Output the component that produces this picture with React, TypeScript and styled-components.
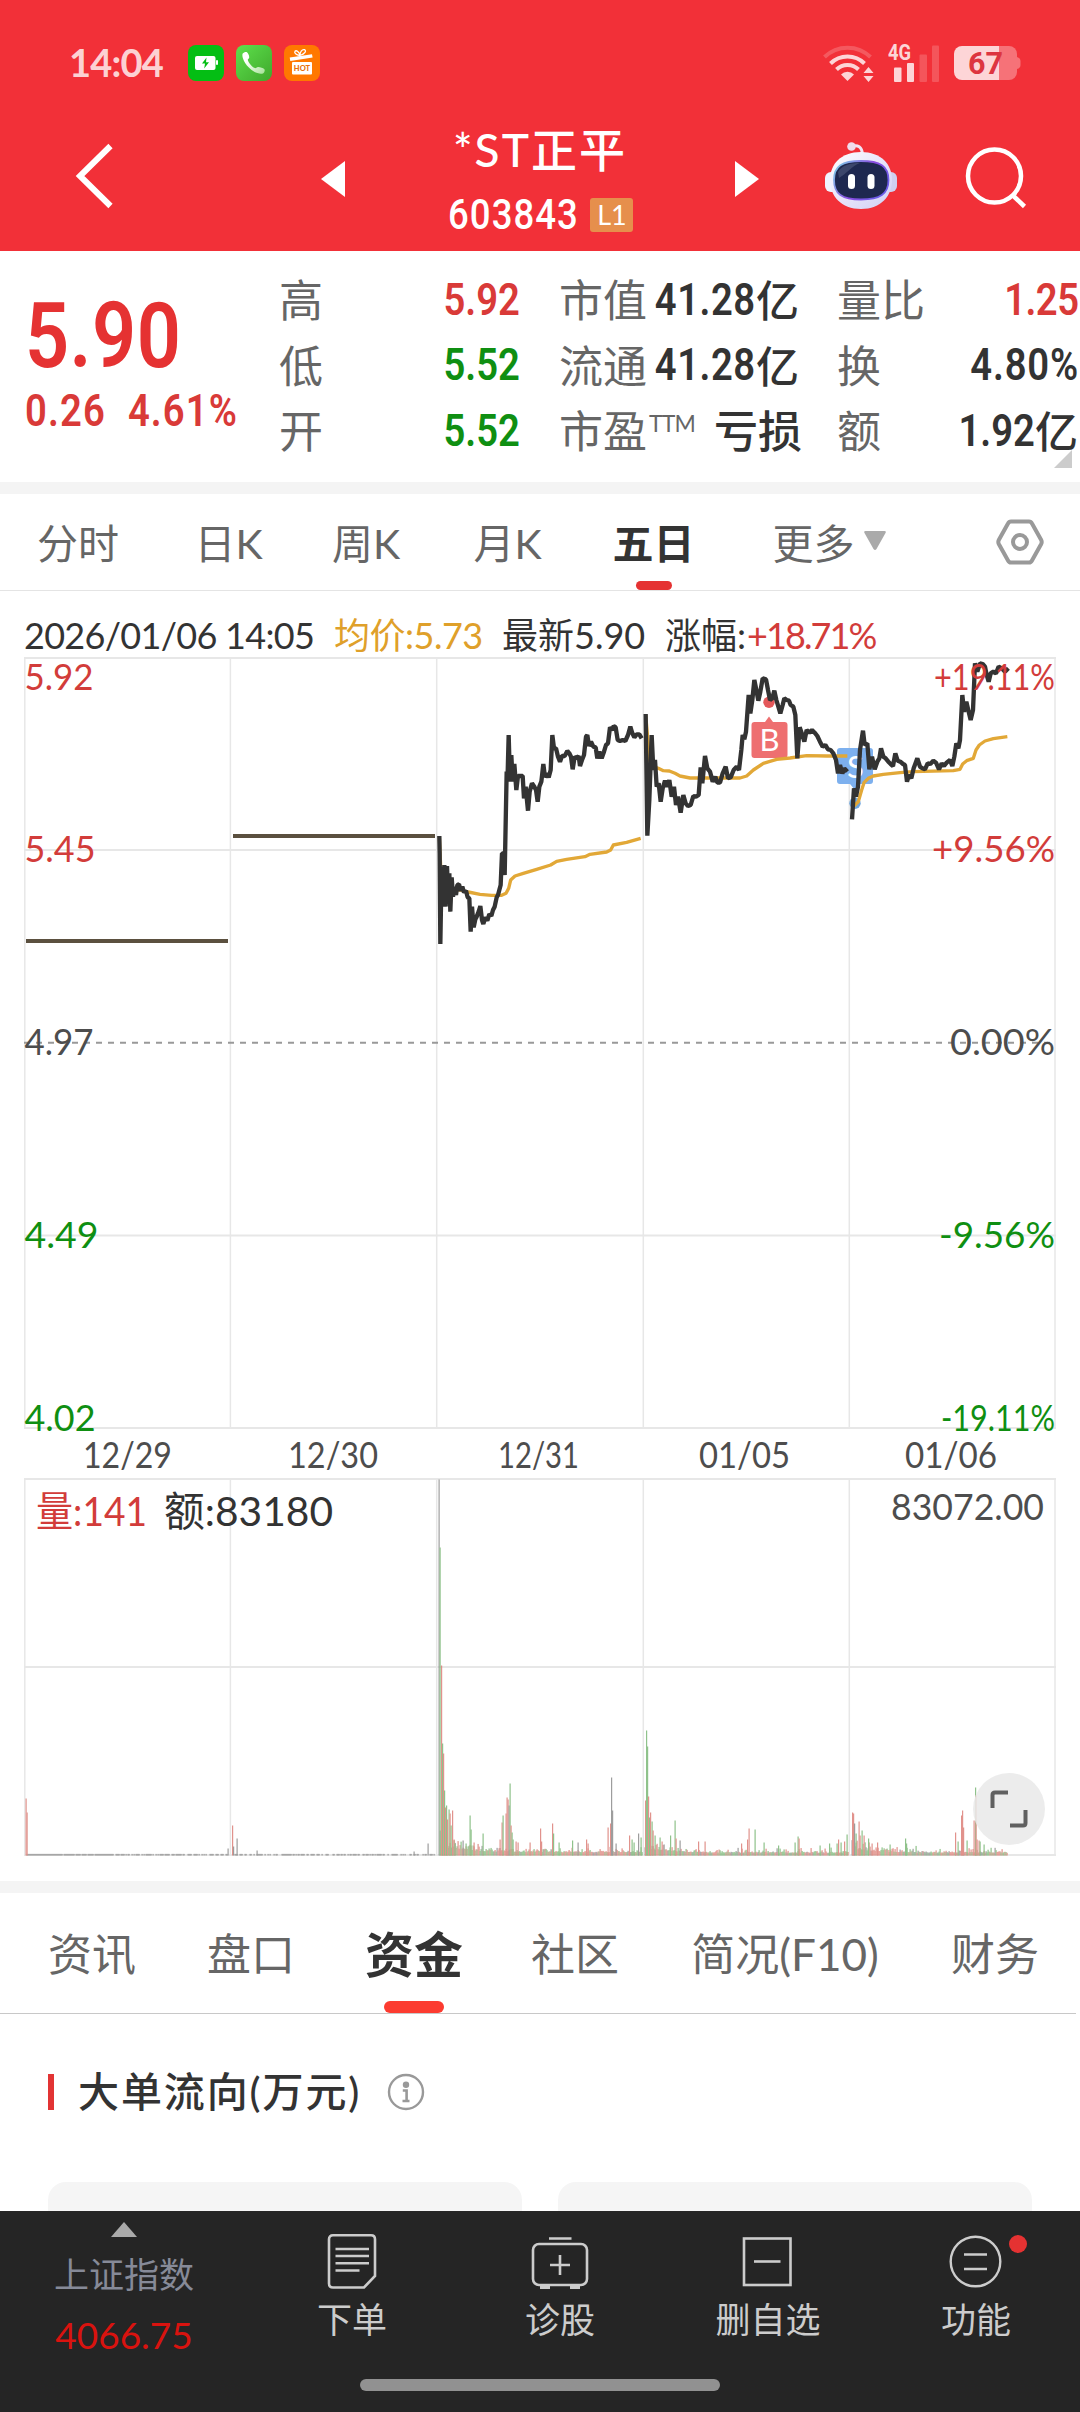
import React from 'react';
import styled, { createGlobalStyle, css } from 'styled-components';

const SANS = `Lato, "Noto Sans CJK SC", sans-serif`;
const RED = '#d23c3a';
const GREEN = '#0f8f12';

const GlobalStyle = createGlobalStyle`
  * { box-sizing: border-box; }
  body { margin: 0; background: #fff; font-family: ${SANS}; color: #333; }
  svg { display: block; overflow: visible; }
  button { border: 0; padding: 0; background: none; font: inherit; color: inherit; }
`;

const Screen = styled.div`
  width: 1080px;
  height: 2412px;
  display: flex;
  flex-direction: column;
  overflow: hidden;
  background: #fff;
`;

/* ---------- header ---------- */

const Header = styled.header`
  height: 251px;
  flex: none;
  background: #f23038;
`;

const StatusBar = styled.div`
  height: 101px;
  padding: 25px 59px 0 69px;
  display: flex;
  align-items: center;
  justify-content: space-between;
  color: rgba(255, 255, 255, 0.8);
`;

const Clock = styled.span`
  width: 107px;
  font: 700 38px/40px ${SANS};
  letter-spacing: -0.8px;
  margin-top: -3px;
`;

const StatusGroup = styled.div<{ $gap: number }>`
  display: flex;
  align-items: center;
  gap: ${(p) => p.$gap}px;
`;

const TitleBar = styled.div`
  height: 150px;
  display: grid;
  grid-template-columns: 312px 42px 372px 42px 186px 84px;
  align-items: center;
  justify-items: center;
`;

const BackButton = styled.button`
  justify-self: start;
  margin-left: 76px;
`;

const TitleBlock = styled.div`
  display: flex;
  flex-direction: column;
  align-items: center;
  color: #fff;
  padding-top: 8px;
`;

const StockName = styled.div`
  font: 500 46px/52px Lato, "Noto Sans CJK SC", sans-serif;
  letter-spacing: 2px;
`;

const CodeRow = styled.div`
  display: flex;
  align-items: center;
  height: 60px;
  padding-top: 18px;
`;

const Din = styled.span<{ $size?: number; $color?: string; $left?: boolean; $ls?: number; $lh?: number }>`
  display: inline-block;
  flex: none;
  font: 600 ${(p) => p.$size ?? 45}px/${(p) => p.$lh ?? 1.2} Roboto, sans-serif;
  color: ${(p) => p.$color ?? '#333'};
  letter-spacing: ${(p) => p.$ls ?? 0}px;
  transform: scaleX(0.85);
  transform-origin: ${(p) => (p.$left ? 'left' : 'right')} center;
  white-space: pre;
`;

const CodeText = styled(Din)`
  margin-left: -22px;
  font-weight: 500;
`;

const LevelBadge = styled.span`
  width: 43px;
  height: 34px;
  margin-left: 12px;
  border-radius: 3px;
  background: #e68f4c;
  font: 400 27px/33px ${SANS};
  text-align: center;
`;

/* ---------- quote ---------- */

const Quote = styled.section`
  height: 231px;
  flex: none;
  padding-top: 16px;
  display: grid;
  grid-template-columns: 280px 240px 40px 240px 38px 241px;
  position: relative;
`;

const PriceBlock = styled.div`
  padding-left: 25px;
  display: flex;
  flex-direction: column;
`;

const LastPrice = styled.div`
  height: 117px;
  padding-top: 24px;
  line-height: 0;
`;

const Change = styled(Din)`
  word-spacing: 0.5px;
`;

const Stats = styled.div<{ $col: number }>`
  grid-column: ${(p) => p.$col};
  display: flex;
  flex-direction: column;
`;

const StatRow = styled.div`
  height: 65.5px;
  display: flex;
  align-items: center;
  justify-content: space-between;
`;

const StatLabel = styled.span`
  font: 400 44px/62px "Noto Sans CJK SC", sans-serif;
  color: #666;
  white-space: nowrap;
  flex: none;
  margin: -3px 0 0 -1px;
`;

const Ttm = styled.sup`
  font: 400 23px/20px ${SANS};
  vertical-align: 16px;
  margin-left: 2px;
  letter-spacing: -0.8px;
`;

/* The condensed digits leave slack on their left, which the negative margin absorbs. */
const StatValue = styled.span`
  display: flex;
  align-items: center;
  margin: 0 -2px 0 -40px;
`;

const Cjk = styled.span`
  font: 500 44px/62px "Noto Sans CJK SC", sans-serif;
  color: #333;
  margin-top: -3px;
`;

const Unit = styled(Cjk)`
  font-size: 43px;
  margin-right: 3px;
`;

const Corner = styled.i`
  position: absolute;
  right: 8px;
  bottom: 14px;
  width: 18px;
  height: 18px;
  background: #ccc;
  clip-path: polygon(100% 0, 100% 100%, 0 100%);
`;

const Band = styled.div`
  height: 12px;
  flex: none;
  background: #f4f4f4;
`;

/* ---------- tabs ---------- */

const PeriodTabs = styled.nav`
  height: 97px;
  flex: none;
  display: grid;
  grid-template-columns: 156px 145px 130px 153px 139px 212px 1fr;
  border-bottom: 1px solid #e4e4e4;
`;

const SectionTabs = styled.nav`
  height: 121px;
  width: 1076px;
  flex: none;
  display: grid;
  grid-template-columns: 184px 134px 192px 130px 290px 130px;
  border-bottom: 1px solid #c8c8c8;
`;

const Tab = styled.button<{ $active?: boolean; $large?: boolean }>`
  display: flex;
  align-items: center;
  justify-content: center;
  gap: 9px;
  position: relative;
  white-space: nowrap;
  padding-bottom: 3px;
  color: ${(p) => (p.$active ? '#333' : '#666')};
  font-family: ${SANS};
  font-weight: ${(p) => (p.$active ? 700 : 400)};
  font-size: ${(p) => (p.$large ? (p.$active ? 49 : 44) : 41)}px;
  ${(p) =>
    p.$active &&
    css`
      &::after {
        content: '';
        position: absolute;
        bottom: 0;
        left: 50%;
        transform: translateX(-50%);
        width: ${p.$large ? 60 : 36}px;
        height: ${p.$large ? 12 : 9}px;
        border-radius: 6px;
        background: ${p.$large ? '#fc3b30' : '#e53232'};
      }
    `}
`;

const SettingsButton = styled.button`
  justify-self: end;
  align-self: center;
  margin-right: 36px;
  padding-bottom: 1px;
`;

/* ---------- chart ---------- */

const InfoRow = styled.div`
  height: 65px;
  flex: none;
  padding: 22px 0 0 24px;
  display: flex;
  font: 400 36px/44px ${SANS};
`;

const InfoItem = styled.span<{ $w: number; $color?: string; $ls?: number }>`
  width: ${(p) => p.$w}px;
  flex: none;
  white-space: nowrap;
  color: ${(p) => p.$color ?? '#333'};
  letter-spacing: ${(p) => p.$ls ?? 0}px;
`;

const ChartArea = styled.section`
  position: relative;
  height: 1225px;
  flex: none;
`;

const ExpandButton = styled.button`
  position: absolute;
  right: 35px;
  bottom: 36px;
  width: 72px;
  height: 72px;
  border-radius: 50%;
  background: rgba(233, 233, 233, 0.88);
  display: grid;
  place-items: center;
`;

/* ---------- money flow ---------- */

const FlowSection = styled.section`
  height: 197px;
  flex: none;
  overflow: hidden;
  padding: 0 48px;
`;

const FlowTitle = styled.h2`
  margin: 0;
  height: 168px;
  padding-bottom: 12px;
  display: flex;
  align-items: center;
  font: 500 41px/60px Lato, "Noto Sans CJK SC", sans-serif;
  letter-spacing: 1.9px;
  color: #333;

  &::before {
    content: '';
    width: 6px;
    height: 36px;
    margin-right: 24px;
    background: #e23434;
  }
  svg { margin-left: 27px; }
`;

const FlowCards = styled.div`
  display: grid;
  grid-template-columns: 1fr 1fr;
  gap: 36px;
`;

const FlowCard = styled.div`
  height: 200px;
  border-radius: 18px;
  background: #f5f5f5;
`;

/* ---------- bottom bar ---------- */

const BottomBar = styled.footer`
  height: 201px;
  flex: none;
  background: #252525;
  display: grid;
  grid-template: 168px 1fr / 248px repeat(4, 208px);
`;

const IndexCell = styled.div`
  display: flex;
  flex-direction: column;
  align-items: center;
  padding-top: 11px;
`;

const IndexName = styled.span`
  font: 400 35px/44px ${SANS};
  color: #868a98;
  margin-top: 15px;
`;

const IndexValue = styled.span`
  font: 400 37px/44px ${SANS};
  color: #d9130f;
  margin-top: 17px;
`;

const Action = styled.button`
  display: flex;
  flex-direction: column;
  align-items: center;
  padding-top: 20px;
  position: relative;
  font: 400 35px/44px ${SANS};
  color: #ccc;

  svg { margin-bottom: 6px; }
`;

const RedDot = styled.i`
  position: absolute;
  left: 137px;
  top: 24px;
  width: 18px;
  height: 18px;
  border-radius: 50%;
  background: #e53232;
`;

const HomeIndicator = styled.div`
  grid-column: 1 / -1;
  justify-self: center;
  width: 360px;
  height: 12px;
  border-radius: 6px;
  background: #919191;
`;

/* ---------- icons ---------- */

const ChargeIcon = () => (
  <svg width="36" height="36" viewBox="0 0 36 36">
    <rect width="36" height="36" rx="8" fill="#04be14" />
    <rect x="7" y="11" width="20.5" height="14" rx="2" fill="#fff" />
    <rect x="28" y="15" width="2" height="5" rx="1" fill="#fff" />
    <path d="M18.5 12.5l-4.5 6h3l-.8 5 4.8-6.3h-3z" fill="#04be14" />
  </svg>
);

const PhoneIcon = () => (
  <svg width="36" height="36" viewBox="0 0 36 36">
    <defs>
      <linearGradient id="ph" x1="0" y1="0" x2="1" y2="1">
        <stop offset="0" stopColor="#5ee04c" />
        <stop offset="1" stopColor="#3fa82c" />
      </linearGradient>
      <linearGradient id="hs" x1="0" y1="0" x2="1" y2="1">
        <stop offset="0.3" stopColor="#fff" />
        <stop offset="1" stopColor="#a4e295" />
      </linearGradient>
    </defs>
    <rect width="36" height="36" rx="8" fill="url(#ph)" />
    <path
      d="M6.700 8.500c1-1.300 3.300-2 4.300-1.300 1.200 1 2.300 3.500 2.200 5.200 0 1-1.500 1.600-1.400 2.500.5 2.700 4.700 7.200 7.300 8.200 1 .3 2-1.100 3-1 2.200.2 5 1 6.300 2.100.9 1-.2 3.700-1.400 4.300-2.600 1-6.500-.3-9.500-2.200C12.500 23 8.500 18.200 7 13.500c-.6-1.700-.9-3.900-.3-5z"
      fill="url(#hs)"
    />
  </svg>
);

const HotIcon = () => (
  <svg width="36" height="36" viewBox="0 0 36 36">
    <rect width="36" height="36" rx="8" fill="#ff7800" />
    <path d="M16 10.500c-4-.5-6-2.500-5-4.200 1.300-1.500 4.300.6 5 4.200zm0 0c-.2-3.500 2-6.400 4.500-5.800 2.200 1 .5 4.300-4.500 5.800z" fill="none" stroke="#fff" strokeWidth="1.3" />
    <path d="M5.700 12.500L28 9.200l.6 3.400L6.300 16z" fill="#fff" />
    <rect x="8" y="17" width="20" height="12.5" rx="1" fill="#fff" />
    <text x="18" y="26.3" fontFamily="Lato, sans-serif" fontSize="7.5" fontWeight="900" fill="#e8700c" textAnchor="middle">HOT</text>
  </svg>
);

const WifiIcon = () => (
  <svg width="51" height="38" viewBox="0 0 51 38">
    <g fill="none" stroke="#fff" strokeWidth="4">
      <path d="M1.500 13a33 33 0 0 1 46 0" opacity="0.2" />
      <path d="M7.500 19.500a24 24 0 0 1 34 0" opacity="0.8" />
      <path d="M13.500 25.500a15.500 15.500 0 0 1 22 0" opacity="0.8" />
    </g>
    <path d="M24.500 37l-6.500-6.500a9 9 0 0 1 13 0z" fill="#fff" opacity="0.8" />
    <path d="M40.500 29l5-6 5 6zm0 3l5 6 5-6z" fill="#fff" opacity="0.8" />
  </svg>
);

const SignalIcon = () => (
  <svg width="52" height="38" viewBox="0 0 52 38">
    <text x="0" y="16" fontFamily="Roboto, sans-serif" fontSize="22" fontWeight="700" fill="#fff" opacity="0.8" textLength="23" lengthAdjust="spacingAndGlyphs">4G</text>
    <g fill="#fff">
      <rect x="6" y="23.5" width="7.5" height="14.5" rx="1" opacity="0.8" />
      <rect x="19" y="19" width="7" height="19" rx="1" opacity="0.8" />
      <rect x="31.5" y="10.5" width="7.5" height="27.5" rx="1" opacity="0.18" />
      <rect x="44" y="1.5" width="7" height="36.5" rx="1" opacity="0.18" />
    </g>
  </svg>
);

const BatteryIcon = () => (
  <svg width="67" height="34" viewBox="0 0 67 34">
    <defs>
      <clipPath id="bat"><rect width="63" height="34" rx="8" /></clipPath>
    </defs>
    <g clipPath="url(#bat)" fill="#fff">
      <rect width="45" height="34" opacity="0.8" />
      <rect x="45" width="18" height="34" opacity="0.32" />
    </g>
    <path d="M63 11q3.500 1 3.500 4v4q0 3-3.500 4z" fill="#fff" opacity="0.32" />
    <text x="31.5" y="28" fontFamily="Roboto, sans-serif" fontSize="30.5" fontWeight="700" fill="#dd3540" textAnchor="middle">67</text>
  </svg>
);

const BackIcon = () => (
  <svg width="40" height="68" viewBox="0 0 40 68">
    <path d="M34.500 4L4 34l30.500 30" fill="none" stroke="#fff" strokeWidth="6" />
  </svg>
);

const ArrowSvg = styled.svg`
  margin-top: 6px;
`;

const Arrow = ({ right }: { right?: boolean }) => (
  <ArrowSvg width="24" height="36" viewBox="0 0 24 36">
    <path d={right ? 'M0 0v36l24-18z' : 'M24 0v36L0 18z'} fill="#fff" />
  </ArrowSvg>
);

const RobotIcon = () => (
  <svg width="72" height="68" viewBox="0 0 72 68">
    <defs>
      <linearGradient id="head" x1="0" y1="0" x2="1" y2="1">
        <stop offset="0" stopColor="#fff" />
        <stop offset="0.55" stopColor="#e6e2fa" />
        <stop offset="1" stopColor="#cfd0f4" />
      </linearGradient>
      <linearGradient id="rim" x1="0" y1="0" x2="1" y2="0.5">
        <stop offset="0" stopColor="#7cd8e8" />
        <stop offset="0.6" stopColor="#8a4be0" />
        <stop offset="1" stopColor="#6d5ce8" />
      </linearGradient>
    </defs>
    <path d="M26 4.500c7-2 11 0 11.500 8" fill="none" stroke="#f2e4f4" strokeWidth="3" />
    <circle cx="26.5" cy="4.5" r="4.3" fill="#f0dcec" />
    <rect x="0" y="30" width="14" height="20" rx="6" fill="#eff4ff" />
    <rect x="58" y="30" width="14" height="20" rx="6" fill="#cfd0f0" />
    <path d="M36 10c20 0 31 12 31 28S56 67 36 67 5 54 5 38s11-28 31-28z" fill="url(#head)" />
    <path d="M36 19c19 0 27.500 5 27.500 19S55 57.500 36 57.500 9 52 9 38s8-19 27-19z" fill="#1e2850" stroke="url(#rim)" strokeWidth="1.8" />
    <path d="M13 30c4-7 12-9 22-9-8 3-14 11-21 15z" fill="#5a6486" opacity="0.5" />
    <rect x="23" y="32" width="7" height="15" rx="3.5" fill="#fff" />
    <rect x="42.5" y="32" width="7" height="15" rx="3.5" fill="#fff" />
  </svg>
);

const SearchIcon = () => (
  <svg width="60" height="62" viewBox="0 0 60 62">
    <circle cx="28.5" cy="31" r="26.5" fill="none" stroke="#fff" strokeWidth="4.5" />
    <path d="M47 50.500l11.500 11" stroke="#fff" strokeWidth="4.5" />
  </svg>
);

const HexIcon = () => (
  <svg width="48" height="46" viewBox="0 0 48 46" fill="none" stroke="#999" strokeWidth="4">
    <path d="M15 2.500h18q2 0 3 2l9.200 16.500q1 2 0 4L36 41.500q-1 2-3 2H15q-2 0-3-2L2.800 25q-1-2 0-4L12 4.500q1-2 3-2z" />
    <circle cx="24" cy="23" r="7" />
  </svg>
);

const InfoIcon = () => (
  <svg width="36" height="36" viewBox="0 0 36 36">
    <circle cx="18" cy="18" r="17" fill="none" stroke="#999" strokeWidth="2.4" />
    <circle cx="18" cy="10.8" r="3.2" fill="#999" />
    <path d="M14.800 16.500h3.800V27M14.500 27h7" fill="none" stroke="#999" strokeWidth="2.6" />
  </svg>
);

const OrderIcon = () => (
  <svg width="52" height="60" viewBox="0 0 52 60" fill="none" stroke="#ccc" strokeWidth="2.6">
    <path d="M7 4.300h38q4 0 4 4V45L38 56.500H7q-4 0-4-4V8.300q0-4 4-4z" />
    <path d="M9.500 18h33.500M9.500 25h33.500M9.500 32.300h33.500M9.500 39.500h24" />
  </svg>
);

const DiagnoseIcon = () => (
  <svg width="60" height="60" viewBox="0 0 60 60" fill="none" stroke="#ccc" strokeWidth="2.6">
    <rect x="3" y="13" width="54" height="41" rx="6" />
    <path d="M19 7.500h22.500M30 24v20M20 34h20" />
    <path d="M10 56h10M40 56h10" strokeWidth="4" />
  </svg>
);

const RemoveIcon = () => (
  <svg width="52" height="60" viewBox="0 0 52 60" fill="none" stroke="#ccc" strokeWidth="2.6">
    <rect x="2" y="7.5" width="46.5" height="46.5" />
    <path d="M12 30.500h26.500" />
  </svg>
);

const MoreIcon = () => (
  <svg width="54" height="60" viewBox="0 0 54 60" fill="none" stroke="#ccc" strokeWidth="2.4">
    <circle cx="26.5" cy="30.5" r="24.8" />
    <path d="M15 23.500h23M15 38h23" />
  </svg>
);

/* ---------- chart data ---------- */

const GRID_X = [24.8, 230.4, 436.7, 643.3, 849.3, 1055];

type Series = { origin: [number, number]; price: string; avg: string };

/* Each trading day is stored in thirds of a pixel from its own origin. */
const SERIES: Series[] = [
  {
    origin: [400, 640],
    price:
      '118,588 119,640 121,912 125,680 129,800 133,675 137,800 141,678 144,760 148,700 151,815 155,712 159,770 163,740 168,765 172,735 177,733 182,752 187,740 192,757 198,752 203,772 208,775 212,875 216,800 221,862 226,838 230,830 236,815 241,798 246,840 250,852 256,832 262,842 268,822 274,828 279,810 284,800 290,772 294,765 298,750 302,735 306,640 310,640 314,705 320,395 323,400 326,285 330,425 334,345 338,425 343,372 349,450 354,408 362,408 368,408 372,475 377,440 384,512 389,455 396,430 403,440 408,450 413,485 418,440 424,425 430,372 435,412 441,400 446,412 452,390 457,285 462,325 468,325 474,350 480,365 486,348 494,348 502,333 508,340 513,350 518,388 524,350 530,355 536,348 540,378 546,360 552,345 558,290 562,285 567,318 573,305 580,320 587,322 592,355 598,335 605,355 612,335 618,315 624,310 630,262 637,270 641,258 647,262 653,300 660,303 668,300 676,303 684,285 691,260 697,280 703,292 710,283 718,283 725,295',
    avg: '118,590 122,680 130,740 150,745 180,750 205,756 240,763 275,766 305,766 318,760 326,745 332,720 345,708 370,700 410,688 452,675 470,664 500,658 555,650 570,643 620,636 632,630 640,615 680,607 722,595',
  },
  {
    origin: [640, 650],
    price:
      '17,192 22,557 28,450 35,255 40,360 45,330 50,410 56,400 62,455 68,415 75,392 82,410 88,390 95,440 102,410 108,465 114,440 122,488 130,435 137,460 144,468 152,465 160,438 168,440 176,435 182,352 187,400 195,318 202,355 210,365 218,395 226,380 232,398 240,398 248,370 257,350 264,385 272,382 281,360 290,350 297,360 304,300 308,255 313,268 318,245 326,135 331,190 337,150 343,90 349,120 355,152 361,125 368,85 378,88 384,120 390,150 397,145 403,122 409,150 415,170 421,190 428,165 433,145 440,150 447,152 452,165 460,170 466,195 472,325 479,232 487,255 493,275 500,240 508,248 516,240 524,248 532,258 540,275 548,290 556,285 564,298 572,300 580,310 588,330 594,370 600,345 607,370 613,355 622,365',
    avg: '17,195 22,250 28,330 40,350 55,355 70,362 88,363 105,370 120,378 150,384 200,384 300,384 320,378 340,360 370,340 410,328 450,324 500,317 560,318 622,318',
  },
  {
    origin: [740, 640],
    price:
      '336,538 342,445 348,470 354,440 360,330 369,272 374,315 382,310 388,388 396,350 404,388 412,365 418,355 423,325 430,350 437,355 445,365 452,372 459,378 466,340 473,362 481,365 489,372 495,375 501,425 507,405 514,415 521,385 532,355 540,380 547,385 555,388 563,370 571,372 580,362 588,368 597,388 605,370 612,378 620,368 630,360 637,378 643,350 649,310 655,325 660,300 667,165 672,215 679,185 686,215 692,240 699,210 705,70 712,95 720,70 728,72 735,80 740,105 746,125 752,100 760,95 768,100 776,80 785,85 795,95 805,85',
    avg: '340,500 355,485 365,450 372,428 385,415 400,408 430,403 480,398 520,395 640,392 660,388 668,372 680,362 700,355 708,330 718,315 735,303 760,296 802,290',
  },
];

type Tone = 'r' | 'g' | 'k';
const TONE: Record<Tone, string> = { r: '#dc8078', g: '#7cb877', k: '#8d8d8d' };

/* x, height, tone of the volume spikes */
const SPIKES: [number, number, Tone][] = [
  [26, 57, 'r'], [27, 43, 'r'], [228, 7, 'k'], [232.5, 30, 'r'], [233.5, 9, 'k'], [237, 17, 'k'], [257, 5, 'k'], [414, 4, 'k'], [428, 12, 'k'],
  [439, 376, 'k'], [440, 308, 'g'], [441.5, 190, 'r'], [442.5, 112, 'g'], [443.5, 102, 'r'], [444.5, 65, 'g'], [445.5, 48, 'r'], [446.5, 50, 'g'], [447.5, 36, 'r'], [449, 46, 'g'], [450, 42, 'r'], [451, 30, 'g'], [452.5, 45, 'r'], [454, 16, 'r'], [455, 12, 'g'],
  [463, 15, 'k'], [466, 12, 'g'], [470, 40, 'g'], [471, 26, 'g'], [474, 13, 'r'], [483, 22, 'g'], [500, 16, 'r'], [502, 33, 'r'], [503, 40, 'g'], [506, 42, 'r'], [507, 58, 'r'], [508, 56, 'r'], [509, 50, 'k'], [510, 72, 'g'], [511, 30, 'r'], [512, 23, 'g'], [513, 16, 'g'], [516, 14, 'r'], [518, 13, 'r'],
  [530, 13, 'r'], [540.5, 27, 'r'], [541.5, 14, 'r'], [552.5, 32, 'r'], [553.5, 22, 'g'], [559, 13, 'g'], [572.5, 15, 'g'], [578, 13, 'k'], [586.5, 16, 'r'], [588, 12, 'r'], [608, 28, 'r'], [610.5, 32, 'r'], [611.5, 78, 'k'], [612.5, 45, 'k'], [616, 12, 'k'], [629.5, 20, 'r'], [632, 16, 'g'], [634, 13, 'g'], [638.5, 22, 'k'], [641, 18, 'g'],
  [645.5, 55, 'r'], [646.5, 125, 'g'], [647.5, 109, 'g'], [648.5, 59, 'r'], [649.5, 38, 'g'], [650.5, 43, 'r'], [652, 34, 'g'], [653, 25, 'r'], [655, 20, 'g'], [660, 18, 'g'], [662, 14, 'r'], [670.5, 20, 'g'], [675, 35, 'g'], [676, 17, 'r'], [680, 15, 'k'], [698.5, 14, 'r'], [705, 14, 'r'],
  [741.5, 12, 'r'], [747.5, 16, 'r'], [749, 27, 'r'], [755, 26, 'g'], [764, 13, 'g'], [778.5, 10, 'g'], [795, 13, 'g'], [798, 19, 'g'], [799, 17, 'r'], [820, 10, 'g'], [829.5, 12, 'g'], [837, 12, 'g'], [838.5, 16, 'r'], [841, 13, 'g'], [844.5, 14, 'r'], [847, 21, 'g'],
  [852.5, 43, 'r'], [853.5, 42, 'r'], [854.5, 32, 'k'], [856, 22, 'g'], [859, 34, 'r'], [860, 20, 'r'], [862, 25, 'g'], [864, 20, 'r'], [868.5, 17, 'g'], [872, 12, 'r'], [877.5, 13, 'r'], [890, 11, 'g'], [905.5, 17, 'g'], [906.5, 12, 'g'],
  [955.5, 23, 'r'], [958, 14, 'g'], [961.5, 40, 'r'], [962.5, 45, 'r'], [963.5, 28, 'r'], [967, 15, 'g'], [974, 35, 'r'], [975.5, 68, 'g'], [976, 60, 'r'], [977, 16, 'r'], [979, 15, 'r'], [980, 14, 'g'], [984, 11, 'g'],
];

const BASE_Y = 1855.5;

/* Low background turnover that fades after each open. */
const noise = (() => {
  let seed = 11;
  const rnd = () => {
    seed = (seed * 16807) % 2147483647;
    return seed / 2147483647;
  };
  const bars: [number, number, Tone][] = [];
  for (let x = 27; x < 435; x += 1) {
    if (x > 227 && x < 233) continue;
    if (rnd() < (x < 120 ? 0.95 : 0.6)) bars.push([x, 1.6, 'k']);
  }
  for (let x = 440; x < 1008; x += 1) {
    if (x > 642 && x < 645) continue;
    if (x > 848 && x < 852) continue;
    const open = x < 643 ? 440 : x < 849 ? 645 : 852;
    const day = x < 643 ? 1.4 : 1;
    const level = (3.5 + 13 * Math.exp(-(x - open) / 24)) * day;
    const h = 1.4 + level * (0.35 + 0.9 * rnd() * rnd()) + (rnd() > 0.9 ? 3 : 0);
    const t = rnd();
    bars.push([x, h, t < 0.45 ? 'r' : t < 0.85 ? 'g' : 'k']);
  }
  return bars;
})();

const AXIS: { l: string; r: string; y: number; lw: number; rx: number; c: string }[] = [
  { l: '5.92', r: '+19.11%', y: 690, lw: 69, rx: 934, c: RED },
  { l: '5.45', r: '+9.56%', y: 861.5, lw: 71, rx: 932, c: RED },
  { l: '4.97', r: '0.00%', y: 1054.5, lw: 69, rx: 950, c: '#4d4d4d' },
  { l: '4.49', r: '-9.56%', y: 1247.5, lw: 74, rx: 939, c: GREEN },
  { l: '4.02', r: '-19.11%', y: 1430.5, lw: 71, rx: 941, c: GREEN },
];

const DATES: [string, number, number][] = [
  ['12/29', 83, 89],
  ['12/30', 288, 90],
  ['12/31', 498, 81],
  ['01/05', 699, 91],
  ['01/06', 905, 92],
];

type LabelProps = { x: number; y: number; w: number; fill?: string; children: React.ReactNode };

const Label = ({ x, y, w, fill, children }: LabelProps) => (
  <text x={x} y={y} fill={fill} textLength={w} lengthAdjust="spacingAndGlyphs">{children}</text>
);

const Chart = () => (
  <svg width="1080" height="1225" viewBox="0 656 1080 1225" fontFamily="Lato, 'Noto Sans CJK SC', sans-serif" fontSize="36">
    <g stroke="#e7e7e7" strokeWidth="2">
      {[658, 850, 1235.5, 1428, 1479, 1667, 1855].map((y) => (
        <path key={y} d={`M24 ${y}H1056`} />
      ))}
      {GRID_X.map((x) => (
        <path key={x} d={`M${x} 657V1428M${x} 1479V1855`} strokeWidth={1.5} />
      ))}
    </g>
    <path d="M24 1042.800H1055" stroke="#999" strokeWidth="2" strokeDasharray="6 6" />

    <g stroke="#5b503f" strokeWidth="4">
      <path d="M26 941H228M233 836H435" />
    </g>

    <path d="M754.500 722H765l4-5.500 4 5.500h11.500q3 0 3 3v30q0 3-3 3h-30q-3 0-3-3v-30q0-3 3-3z" fill="#ee6f70" />
    <circle cx="769" cy="702.3" r="5.7" fill="#e4585a" />
    <path d="M840 748h30q3 0 3 3v30q0 3-3 3h-10l-5 6-5-6h-10q-3 0-3-3v-30q0-3 3-3z" fill="#7db0ee" />
    <circle cx="855" cy="803.3" r="5.7" fill="#6fa6dd" />
    <g fill="#fff" fontSize="31" textAnchor="middle">
      <text x="769.5" y="751">B</text>
      <text x="855.5" y="777.5">S</text>
    </g>

    {SERIES.map((s) => (
      <g key={s.origin[0]} transform={`translate(${s.origin[0]} ${s.origin[1]}) scale(${1 / 3})`} fill="none" strokeLinejoin="round">
        <polyline points={s.avg} stroke="#e2a837" strokeWidth="10" />
        <polyline points={s.price} stroke="#333" strokeWidth="13" strokeLinejoin="bevel" />
      </g>
    ))}

    {AXIS.map((a) => (
      <g key={a.l} fill={a.c}>
        <Label x={24.5} y={a.y} w={a.lw}>{a.l}</Label>
        <Label x={a.rx} y={a.y} w={1055 - a.rx}>{a.r}</Label>
      </g>
    ))}
    <g fill="#4d4d4d">
      {DATES.map(([d, x, w]) => (
        <Label key={d} x={x} y={1468} w={w}>{d}</Label>
      ))}
      <Label x={891} y={1519.5} w={153}>83072.00</Label>
    </g>
    <g fontSize="41">
      <Label x={36} y={1525.5} w={111} fill={RED}>量:141</Label>
      <Label x={164} y={1525.5} w={169} fill="#333">额:83180</Label>
    </g>

    <g opacity="0.85">
      {[...noise, ...SPIKES].map(([x, h, t], i) => (
        <rect key={i} x={x - 0.5} y={BASE_Y - h} width="1.2" height={h} fill={TONE[t]} />
      ))}
    </g>
  </svg>
);

export default function App() {
  return (
    <>
      <GlobalStyle />
      <Screen>
        <Header>
          <StatusBar>
            <StatusGroup $gap={12}>
              <Clock>14:04</Clock>
              <ChargeIcon />
              <PhoneIcon />
              <HotIcon />
            </StatusGroup>
            <StatusGroup $gap={14}>
              <WifiIcon />
              <SignalIcon />
              <BatteryIcon />
            </StatusGroup>
          </StatusBar>
          <TitleBar>
            <BackButton><BackIcon /></BackButton>
            <Arrow />
            <TitleBlock>
              <StockName>*ST正平</StockName>
              <CodeRow>
                <CodeText $size={43} $color="#fff" $ls={1.2}>603843</CodeText>
                <LevelBadge>L1</LevelBadge>
              </CodeRow>
            </TitleBlock>
            <Arrow right />
            <RobotIcon />
            <SearchIcon />
          </TitleBar>
        </Header>

        <Quote>
          <PriceBlock>
            <LastPrice><Din $size={91} $lh={1} $color="#e53232" $left $ls={0.5}>5.90</Din></LastPrice>
            <Change $color="#d93a38" $left $ls={1.3}>{'0.26  4.61%'}</Change>
          </PriceBlock>
          <Stats $col={2}>
            <StatRow><StatLabel>高</StatLabel><Din $color="#d93a38">5.92</Din></StatRow>
            <StatRow><StatLabel>低</StatLabel><Din $color={GREEN}>5.52</Din></StatRow>
            <StatRow><StatLabel>开</StatLabel><Din $color={GREEN}>5.52</Din></StatRow>
          </Stats>
          <Stats $col={4}>
            <StatRow><StatLabel>市值</StatLabel><StatValue><Din $ls={0.6}>41.28</Din><Unit>亿</Unit></StatValue></StatRow>
            <StatRow><StatLabel>流通</StatLabel><StatValue><Din $ls={0.6}>41.28</Din><Unit>亿</Unit></StatValue></StatRow>
            <StatRow><StatLabel>市盈<Ttm>TTM</Ttm></StatLabel><StatValue><Cjk>亏损</Cjk></StatValue></StatRow>
          </Stats>
          <Stats $col={6}>
            <StatRow><StatLabel>量比</StatLabel><Din $color="#d93a38" $ls={-0.6}>1.25</Din></StatRow>
            <StatRow><StatLabel>换</StatLabel><Din $ls={1}>4.80%</Din></StatRow>
            <StatRow><StatLabel>额</StatLabel><StatValue><Din>1.92</Din><Unit>亿</Unit></StatValue></StatRow>
          </Stats>
          <Corner />
        </Quote>
        <Band />

        <PeriodTabs>
          <Tab>分时</Tab>
          <Tab>日K</Tab>
          <Tab>周K</Tab>
          <Tab>月K</Tab>
          <Tab $active>五日</Tab>
          <Tab>
            更多
            <svg width="22" height="19" viewBox="0 0 22 19"><path d="M1.500 0h19q2 0 1 2l-9 16q-1.500 2-3 0l-9-16q-1-2 1-2z" fill="#aaa" /></svg>
          </Tab>
          <SettingsButton><HexIcon /></SettingsButton>
        </PeriodTabs>

        <InfoRow>
          <InfoItem $w={310} $ls={-0.7}>2026/01/06 14:05</InfoItem>
          <InfoItem $w={168} $color="#dfa02a" $ls={-0.5}>均价:5.73</InfoItem>
          <InfoItem $w={163}>最新5.90</InfoItem>
          <InfoItem $w={82}>涨幅:</InfoItem>
          <InfoItem $w={140} $color={RED} $ls={-1.9}>+18.71%</InfoItem>
        </InfoRow>
        <ChartArea>
          <Chart />
          <ExpandButton>
            <svg width="38" height="38" viewBox="0 0 38 38" fill="none" stroke="#606060" strokeWidth="4">
              <path d="M18 2.500H5q-2.500 0-2.500 2.500V18M20 35.500h13q2.500 0 2.500-2.500V20" />
            </svg>
          </ExpandButton>
        </ChartArea>
        <Band />

        <SectionTabs>
          <Tab $large>资讯</Tab>
          <Tab $large>盘口</Tab>
          <Tab $large $active>资金</Tab>
          <Tab $large>社区</Tab>
          <Tab $large>简况(F10)</Tab>
          <Tab $large>财务</Tab>
        </SectionTabs>

        <FlowSection>
          <FlowTitle>大单流向(万元)<InfoIcon /></FlowTitle>
          <FlowCards>
            <FlowCard />
            <FlowCard />
          </FlowCards>
        </FlowSection>

        <BottomBar>
          <IndexCell>
            <svg width="26" height="15" viewBox="0 0 26 15"><path d="M13 0l13 15H0z" fill="#aaa" /></svg>
            <IndexName>上证指数</IndexName>
            <IndexValue>4066.75</IndexValue>
          </IndexCell>
          <Action><OrderIcon />下单</Action>
          <Action><DiagnoseIcon />诊股</Action>
          <Action><RemoveIcon />删自选</Action>
          <Action><MoreIcon />功能<RedDot /></Action>
          <HomeIndicator />
        </BottomBar>
      </Screen>
    </>
  );
}
